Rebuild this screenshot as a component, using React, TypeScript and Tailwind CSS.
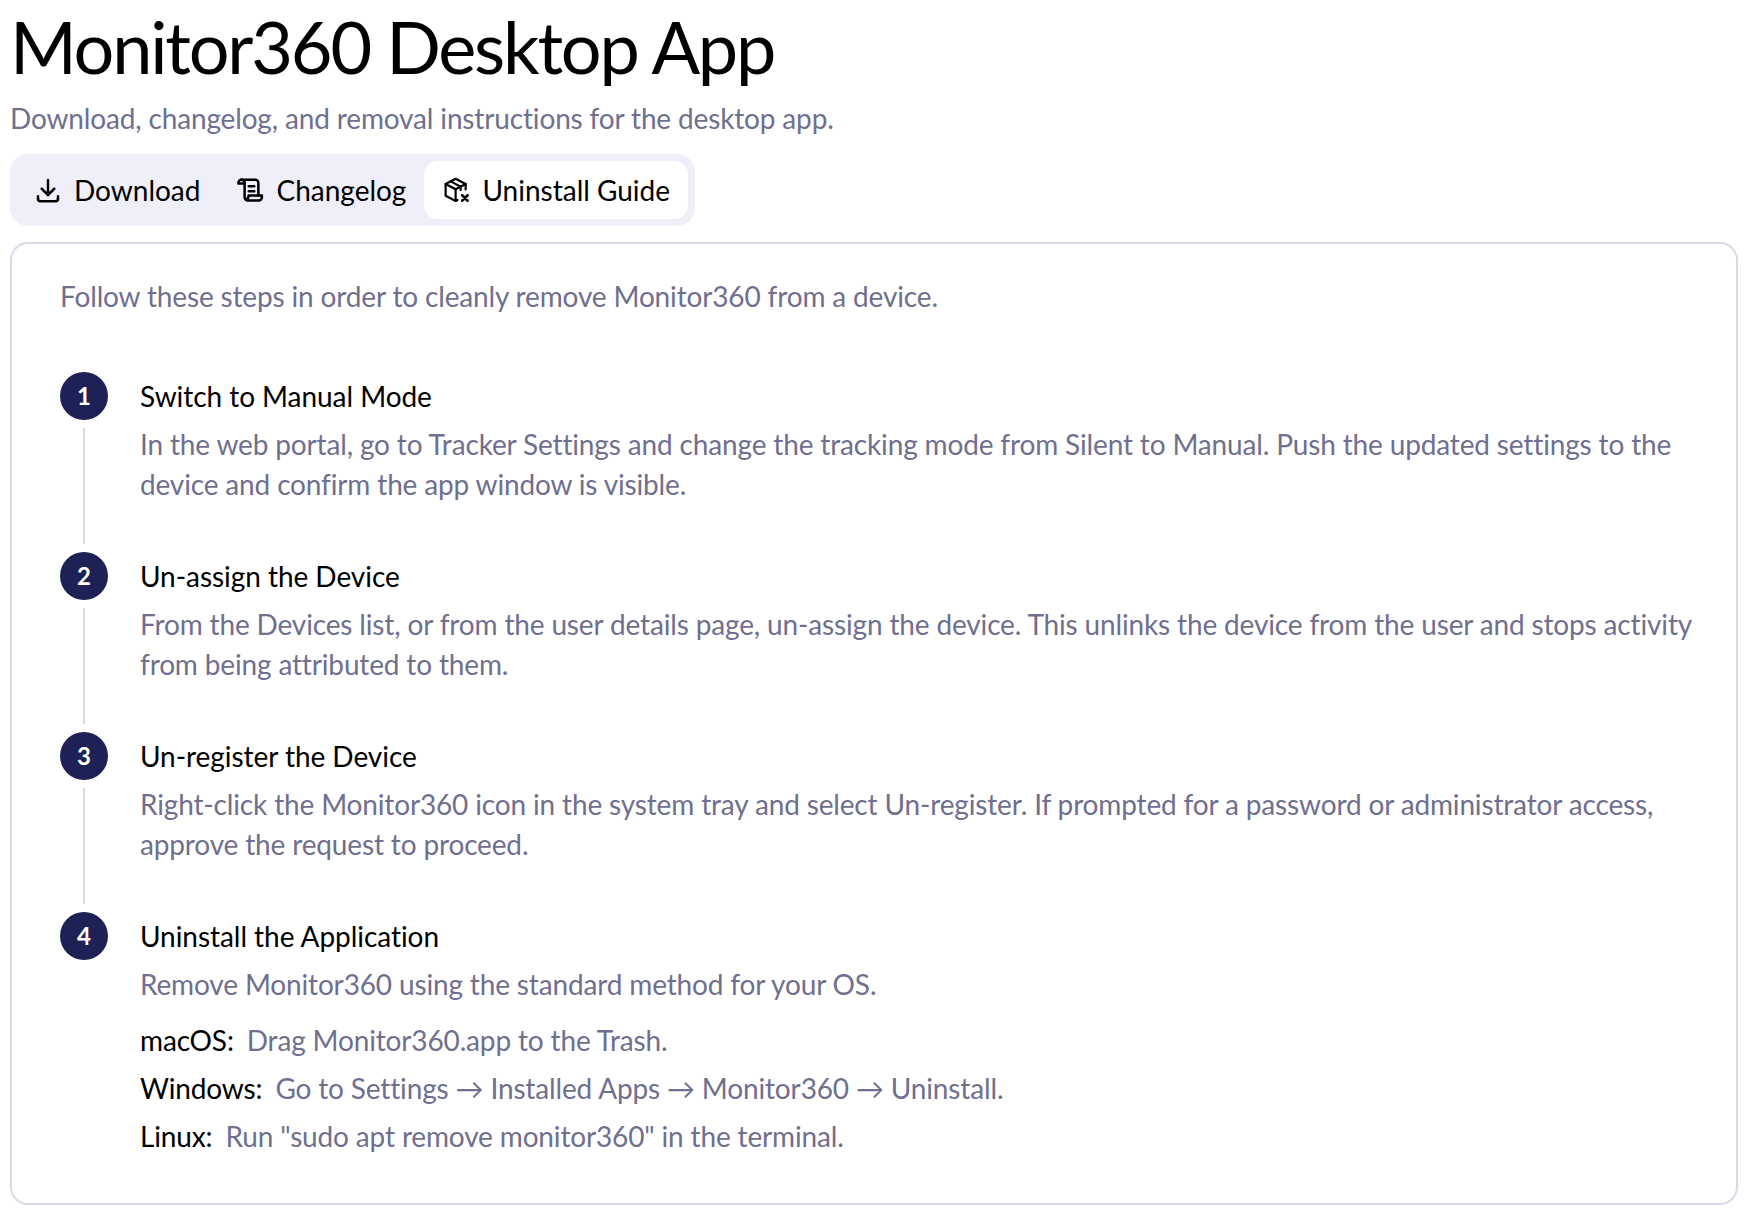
import { TbDownload } from 'react-icons/tb';

const FONT = 'font-["Lato",sans-serif]';

const STEPS = [
  {
    title: 'Switch to Manual Mode',
    body: 'In the web portal, go to Tracker Settings and change the tracking mode from Silent to Manual. Push the updated settings to the device and confirm the app window is visible.',
  },
  {
    title: 'Un-assign the Device',
    body: 'From the Devices list, or from the user details page, un-assign the device. This unlinks the device from the user and stops activity from being attributed to them.',
  },
  {
    title: 'Un-register the Device',
    body: 'Right-click the Monitor360 icon in the system tray and select Un-register. If prompted for a password or administrator access, approve the request to proceed.',
  },
];

const OS_ROWS = [
  { os: 'macOS:', text: 'Drag Monitor360.app to the Trash.' },
  { os: 'Windows:', text: 'Go to Settings → Installed Apps → Monitor360 → Uninstall.' },
  { os: 'Linux:', text: 'Run "sudo apt remove monitor360" in the terminal.' },
];

function ScrollIcon() {
  return (
    <svg width="30" height="30" viewBox="0 0 24 24" fill="none" stroke="currentColor" strokeWidth="2" strokeLinecap="round" strokeLinejoin="round">
      <path d="M6 3.8h11a2.5 2.5 0 0 1 2.5 2.5v10" />
      <path d="M6 3.8a2.5 2.5 0 0 0-2.5 2.5v.5h5v11a2.6 2.6 0 0 0 2.6 2.6h8.6a2.6 2.6 0 0 0 2.6-2.6v-1.4H11.6v1.2a1.6 1.6 0 0 1-3.1 .4" />
      <path d="M6 3.8a2.5 2.5 0 0 1 2.5 2.5v.5" />
      <path d="M11.8 9h4.4M11.8 13h4.4" />
    </svg>
  );
}

function BoxRemoveIcon() {
  return (
    <svg width="30" height="30" viewBox="-1.5 0 24 24" fill="none" stroke="currentColor" strokeWidth="1.75" strokeLinecap="round" strokeLinejoin="round" className="overflow-visible">
      <path d="M19 11.5V7.2L11 3 3 7.2v9.4l8 4.2 1.5-.8" />
      <path d="M3 7.2l8 4.2 8-4.2" />
      <path d="M11 11.4v9.2" />
      <path d="M7 5.1l8 4.2v2.6" />
      <path d="M16.2 16.2l4.4 4.4M20.6 16.2l-4.4 4.4" strokeWidth="2" />
    </svg>
  );
}

function StepBadge({ n }: { n: number }) {
  return (
    <div className="w-12 h-12 rounded-full bg-[#1e2156] text-white flex items-center justify-center text-[24px] font-bold shrink-0">
      {n}
    </div>
  );
}

export default function App() {
  return (
    <div className={`${FONT} w-[1752px] h-[1218px] bg-white px-[10px] overflow-hidden tracking-[-0.15px]`}>
      <h1 className="text-[72px] leading-[92px] font-normal text-black tracking-[-2.2px]">Monitor360 Desktop App</h1>
      <p className="text-[28px] leading-[40px] text-[#6f6f8f] mt-[6px]">
        Download, changelog, and removal instructions for the desktop app.
      </p>
      <div className="mt-[16px] inline-flex items-center p-[7px] rounded-[18px] bg-[#eeeff8] gap-[2px] tracking-normal">
        <div className="flex items-center gap-[11px] h-[58px] px-[16px] text-[28px] text-black">
          <TbDownload size={30} strokeWidth={2} />
          Download
        </div>
        <div className="flex items-center gap-[12px] h-[58px] px-[16px] text-[28px] text-black">
          <ScrollIcon />
          Changelog
        </div>
        <div className="flex items-center gap-[12px] h-[58px] pl-[16px] pr-[18px] text-[28px] text-black bg-white rounded-[14px]">
          <BoxRemoveIcon />
          Uninstall Guide
        </div>
      </div>
      <div className="mt-[16px] w-[1728px] h-[963px] border-2 border-[#d9d9e8] rounded-[18px] pt-[32px] pl-[48px] pr-[32px]">
        <p className="text-[28px] leading-[40px] text-[#6f6f8f]">
          Follow these steps in order to cleanly remove Monitor360 from a device.
        </p>
        <div className="mt-[56px] flex flex-col">
          {STEPS.map((s, i) => (
            <div key={s.title} className="flex gap-[32px] h-[180px]">
              <div className="flex flex-col items-center gap-[8px] pb-[8px]">
                <StepBadge n={i + 1} />
                <div className="w-[2px] flex-1 bg-[#d9d9e8]" />
              </div>
              <div>
                <div className="text-[28px] leading-[48px] mb-[4px] text-black tracking-[-0.05px]">{s.title}</div>
                <p className="text-[28px] leading-[40px] text-[#6f6f8f]">{s.body}</p>
              </div>
            </div>
          ))}
          <div className="flex gap-[32px]">
            <StepBadge n={4} />
            <div>
              <div className="text-[28px] leading-[48px] mb-[4px] text-black tracking-[-0.05px]">Uninstall the Application</div>
              <p className="text-[28px] leading-[40px] text-[#6f6f8f]">
                Remove Monitor360 using the standard method for your OS.
              </p>
              <div className="mt-[16px] flex flex-col gap-[8px]">
                {OS_ROWS.map((r) => (
                  <div key={r.os} className="flex gap-[13px] text-[28px] leading-[40px]">
                    <span className="text-black">{r.os}</span>
                    <span className="text-[#6f6f8f]">{r.text}</span>
                  </div>
                ))}
              </div>
            </div>
          </div>
        </div>
      </div>
    </div>
  );
}
